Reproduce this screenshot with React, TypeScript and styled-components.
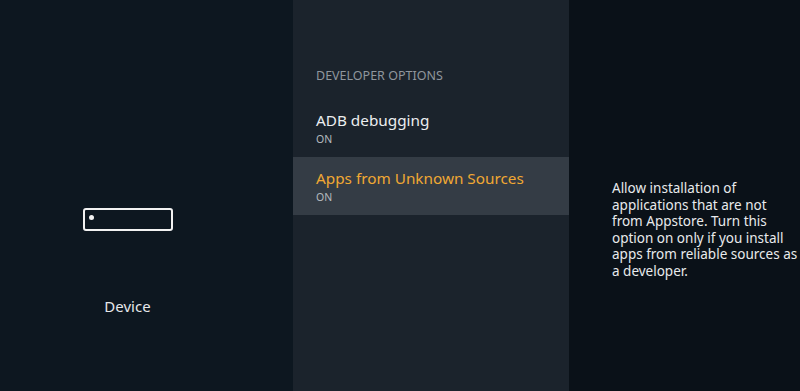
import React from 'react';
import styled, { createGlobalStyle } from 'styled-components';

const GlobalStyle = createGlobalStyle`
  html, body {
    margin: 0;
    padding: 0;
    background: #0d1720;
  }
  body {
    font-family: 'Noto Sans', 'Open Sans', sans-serif;
  }
`;

const Screen = styled.div`
  display: grid;
  grid-template-columns: 293px 276px 1fr;
  width: 800px;
  height: 391px;
  overflow: hidden;
`;

const SidePanel = styled.div`
  background: #0d1720;
  display: flex;
  flex-direction: column;
  align-items: center;
  padding-right: 38px;
  padding-top: 208px;
`;

const DeviceIcon = styled.div`
  box-sizing: border-box;
  width: 90px;
  height: 23px;
  border: 2px solid #f2f2f2;
  border-radius: 3px;
  display: flex;
  align-items: center;
  padding-left: 4px;
`;

const Dot = styled.span`
  width: 5px;
  height: 5px;
  border-radius: 50%;
  background: #f2f2f2;
  margin-top: -5px;
`;

const SideLabel = styled.div`
  margin-top: 65px;
  color: #e6e8ea;
  font-size: 15px;
  line-height: 20px;
`;

const MenuPanel = styled.div`
  background: #1b232c;
  display: flex;
  flex-direction: column;
  padding-top: 68px;
`;

const SectionTitle = styled.div`
  padding-left: 23px;
  color: #8f969d;
  font-size: 12.5px;
  line-height: 16px;
  margin-bottom: 15px;
`;

const Row = styled.div<{ $selected?: boolean }>`
  height: 58px;
  box-sizing: border-box;
  padding: 11px 23px 0;
  background: ${(p) => (p.$selected ? '#343c45' : 'transparent')};
`;

const RowTitle = styled.div<{ $selected?: boolean }>`
  font-size: 15.3px;
  line-height: 20px;
  color: ${(p) => (p.$selected ? '#f0a833' : '#eceef0')};
`;

const RowValue = styled.div`
  margin-top: 1.5px;
  font-size: 10.5px;
  line-height: 14px;
  color: #b4b9be;
`;

const InfoPanel = styled.div`
  background: #0a1118;
  padding: 180px 0 0 43px;
`;

const InfoText = styled.p`
  margin: 0;
  width: 188px;
  color: #e8eaec;
  font-size: 13.5px;
  line-height: 16.6px;
  white-space: nowrap;
`;

const infoLines = [
  'Allow installation of',
  'applications that are not',
  'from Appstore. Turn this',
  'option on only if you install',
  'apps from reliable sources as',
  'a developer.',
];

const App: React.FC = () => {
  return (
    <>
      <GlobalStyle />
      <Screen>
        <SidePanel>
          <DeviceIcon>
            <Dot />
          </DeviceIcon>
          <SideLabel>Device</SideLabel>
        </SidePanel>
        <MenuPanel>
          <SectionTitle>DEVELOPER OPTIONS</SectionTitle>
          <Row>
            <RowTitle>ADB debugging</RowTitle>
            <RowValue>ON</RowValue>
          </Row>
          <Row $selected>
            <RowTitle $selected>Apps from Unknown Sources</RowTitle>
            <RowValue>ON</RowValue>
          </Row>
        </MenuPanel>
        <InfoPanel>
          <InfoText>
            {infoLines.map((line, i) => (
              <React.Fragment key={i}>
                {line}
                {i < infoLines.length - 1 && <br />}
              </React.Fragment>
            ))}
          </InfoText>
        </InfoPanel>
      </Screen>
    </>
  );
};

export default App;
